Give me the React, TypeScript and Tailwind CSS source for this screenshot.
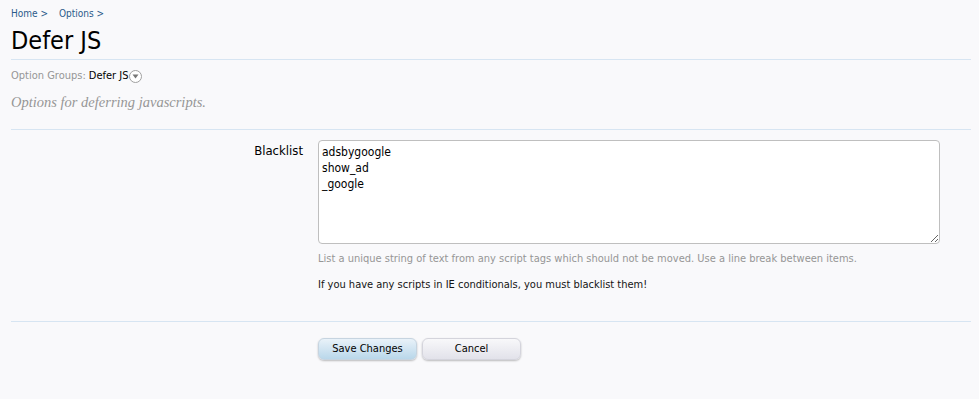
const sans = '"DejaVu Sans Condensed", "DejaVu Sans", sans-serif';

const App = () => {
  return (
    <div
      className="min-h-screen bg-[#f9f9fb] pl-[11px] pr-[8px] text-[11px] text-[#141414]"
      style={{ fontFamily: sans, fontStretch: "condensed" }}
    >
      <div className="flex gap-[11px] pt-[7px] text-[10px] leading-[14px] text-[#2b5b8a]">
        <span>Home &gt;</span>
        <span>Options &gt;</span>
      </div>
      <h1 className="mt-[6px] text-[25px] leading-[28px] text-black">Defer JS</h1>
      <div className="mt-[4px] border-t border-[#d7e5f2]" />
      <div className="mt-[9px] flex items-center leading-[14px]">
        <span className="text-[#969696]">Option Groups:</span>
        <span className="ml-[3px] text-black">Defer JS</span>
        <span className="ml-[1px] flex h-[13px] w-[13px] items-center justify-center rounded-full border border-[#a0a0a0] bg-white">
          <svg width="7" height="5" viewBox="0 0 7 5">
            <path d="M0.5 0.5 L6.5 0.5 L3.5 4.5 Z" fill="#777" />
          </svg>
        </span>
      </div>
      <p
        className="mt-[10px] text-[14.5px] italic leading-[18px] text-[#969696]"
        style={{ fontFamily: '"Liberation Serif", serif' }}
      >
        Options for deferring javascripts.
      </p>
      <div className="mt-[18px] border-t border-[#d7e5f2]" />

      <div className="mt-[10px] flex">
        <label className="w-[307px] shrink-0 pr-[15px] pt-[3px] text-right text-[13px] leading-[16px] text-black">
          Blacklist
        </label>
        <div className="w-[622px]">
          <textarea
            className="block h-[104px] w-full resize-y rounded-[4px] border border-[#bfbfbf] bg-white px-[3px] py-[3px] text-[12px] leading-[16px] text-black outline-none"
            style={{ fontFamily: sans, fontStretch: "condensed" }}
            defaultValue={"adsbygoogle\nshow_ad\n_google"}
          />
          <p className="mt-[8px] leading-[14px] text-[#969696]">
            List a unique string of text from any script tags which should not be moved. Use a line break between items.
          </p>
          <p className="mt-[12px] leading-[14px] text-[#141414]">
            If you have any scripts in IE conditionals, you must blacklist them!
          </p>
        </div>
      </div>

      <div className="mt-[29px] border-t border-[#d7e5f2]" />
      <div className="mt-[16px] flex gap-[5px] pl-[307px]">
        <button
          className="h-[22px] w-[99px] rounded-[6px] border border-[#c6d4e0] bg-gradient-to-b from-[#e9f2f9] to-[#b9d7ea] text-[11px] text-black shadow-[0_1px_2px_rgba(0,0,0,0.25)]"
          style={{ fontFamily: sans, fontStretch: "condensed" }}
        >
          Save Changes
        </button>
        <button
          className="h-[22px] w-[99px] rounded-[6px] border border-[#d4d4dc] bg-gradient-to-b from-[#f8f8fa] to-[#e2e2ea] text-[11px] text-black shadow-[0_1px_2px_rgba(0,0,0,0.25)]"
          style={{ fontFamily: sans, fontStretch: "condensed" }}
        >
          Cancel
        </button>
      </div>
    </div>
  );
};

export default App;
